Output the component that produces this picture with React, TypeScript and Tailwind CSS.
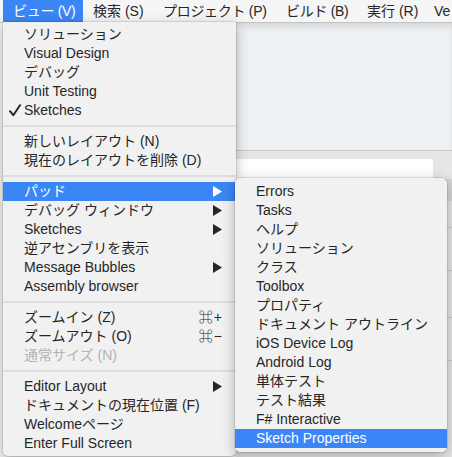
import React from "react";

type Item =
  | "sep"
  | {
      t: string;
      check?: boolean;
      arrow?: boolean;
      active?: boolean;
      sc?: string;
      disabled?: boolean;
    };

const mainItems: Item[] = [
  { t: "ソリューション" },
  { t: "Visual Design" },
  { t: "デバッグ" },
  { t: "Unit Testing" },
  { t: "Sketches", check: true },
  "sep",
  { t: "新しいレイアウト (N)" },
  { t: "現在のレイアウトを削除 (D)" },
  "sep",
  { t: "パッド", arrow: true, active: true },
  { t: "デバッグ ウィンドウ", arrow: true },
  { t: "Sketches", arrow: true },
  { t: "逆アセンブリを表示" },
  { t: "Message Bubbles", arrow: true },
  { t: "Assembly browser" },
  "sep",
  { t: "ズームイン (Z)", sc: "⌘+" },
  { t: "ズームアウト (O)", sc: "⌘−" },
  { t: "通常サイズ (N)", disabled: true },
  "sep",
  { t: "Editor Layout", arrow: true },
  { t: "ドキュメントの現在位置 (F)" },
  { t: "Welcomeページ" },
  { t: "Enter Full Screen" },
];

const subItems: Item[] = [
  { t: "Errors" },
  { t: "Tasks" },
  { t: "ヘルプ" },
  { t: "ソリューション" },
  { t: "クラス" },
  { t: "Toolbox" },
  { t: "プロパティ" },
  { t: "ドキュメント アウトライン" },
  { t: "iOS Device Log" },
  { t: "Android Log" },
  { t: "単体テスト" },
  { t: "テスト結果" },
  { t: "F# Interactive" },
  { t: "Sketch Properties", active: true },
];

function Arrow({ white }: { white?: boolean }) {
  return (
    <svg width="9" height="11" viewBox="0 0 9 11" className="shrink-0">
      <polygon points="0,0 9,5.5 0,11" fill={white ? "#ffffff" : "#262626"} />
    </svg>
  );
}

function Check() {
  return (
    <svg width="12" height="13" viewBox="0 0 12 13">
      <path
        d="M1 7.2 L4.3 11.2 L11 1.2"
        fill="none"
        stroke="#262626"
        strokeWidth="2"
        strokeLinecap="round"
        strokeLinejoin="round"
      />
    </svg>
  );
}

function Row({ item, sub }: { item: Item; sub?: boolean }) {
  if (item === "sep") {
    return (
      <div className="h-[12px] flex items-center">
        <div className="h-[2px] w-full bg-[#dedede]" />
      </div>
    );
  }
  const color = item.active
    ? "text-white bg-[#3b86f6]"
    : item.disabled
    ? "text-[#b3b3b3]"
    : "text-[#262626]";
  return (
    <div
      className={`relative h-[19px] flex items-center ${
        sub ? "pl-[21px] pr-[12px]" : "pl-[21px] pr-[14px]"
      } ${color}`}
    >
      {item.check && (
        <div className="absolute left-[6px] top-[3px]">
          <Check />
        </div>
      )}
      <span className="flex-1 whitespace-nowrap leading-[19px]">{item.t}</span>
      {item.arrow && <Arrow white={item.active} />}
      {item.sc && (
        <span className="whitespace-nowrap leading-[19px] tracking-[1px] mr-[-1px]">
          {item.sc}
        </span>
      )}
    </div>
  );
}

export default function App() {
  return (
    <div className="relative w-[452px] h-[457px] overflow-hidden bg-[#e5e5e5] font-['Liberation_Sans','Noto_Sans_CJK_JP','DejaVu_Sans',sans-serif] text-[14px]">
      {/* Menu bar */}
      <div className="h-[23px] flex items-stretch bg-[#f5f5f5] border-b border-[#c4c4c4] pl-[3px] text-[#262626]">
        <div className="w-[80px] shrink-0 flex items-center bg-[#3b86f6] text-white pl-[10px] whitespace-nowrap tracking-[-0.3px]">
          ビュー (V)
        </div>
        <div className="w-[70px] shrink-0 flex items-center pl-[10px] whitespace-nowrap">検索 (S)</div>
        <div className="w-[123px] shrink-0 flex items-center pl-[10px] whitespace-nowrap tracking-[-0.3px]">プロジェクト (P)</div>
        <div className="w-[81px] shrink-0 flex items-center pl-[10px] whitespace-nowrap tracking-[-0.3px]">ビルド (B)</div>
        <div className="w-[67px] shrink-0 flex items-center pl-[10px] whitespace-nowrap">実行 (R)</div>
        <div className="shrink-0 flex items-center pl-[10px] whitespace-nowrap">Ve</div>
      </div>

      {/* Background window content */}
      <div className="flex h-[434px]">
        <div className="w-[236px] bg-[#f4f4f4]" />
        <div className="flex-1 flex flex-col">
          <div className="h-[128px] bg-[#eef1f3] shadow-[inset_0_5px_6px_-2px_rgba(0,0,0,0.12)] border-b border-[#c8c8c8]" />
          <div className="flex-1 bg-[#e6e6e6] pt-[8px] flex">
            <div className="flex-1 flex flex-col">
              <div className="h-[60px] bg-white rounded-tr-[4px]" />
              <div className="flex-1" />
            </div>
            <div className="w-[19px] flex flex-col">
              <div className="h-[20px]" />
              <div className="h-[22px] bg-[#d6d6d6]" />
              <div className="h-[27px] border-b border-[#c9c9c9]" />
              <div className="h-[43px] border-b border-[#c9c9c9]" />
              <div className="h-[47px] border-b border-[#c9c9c9]" />
              <div className="h-[43px] border-b border-[#c9c9c9]" />
            </div>
          </div>
        </div>
      </div>

      {/* Main dropdown menu */}
      <div className="absolute left-[3px] top-[22px] w-[233px] bg-[#f1f1f1] rounded-b-[5px] pt-[3px] pb-[3px] shadow-[0_4px_14px_rgba(0,0,0,0.28),0_0_0_0.5px_rgba(0,0,0,0.18)]">
        {mainItems.map((it, i) => (
          <Row key={i} item={it} />
        ))}
      </div>

      {/* Submenu */}
      <div className="absolute left-[235px] top-[178px] w-[212px] bg-[#f1f1f1] rounded-[5px] pt-[4px] pb-[4px] shadow-[0_4px_14px_rgba(0,0,0,0.28),0_0_0_0.5px_rgba(0,0,0,0.18)]">
        {subItems.map((it, i) => (
          <Row key={i} item={it} sub />
        ))}
      </div>
    </div>
  );
}
